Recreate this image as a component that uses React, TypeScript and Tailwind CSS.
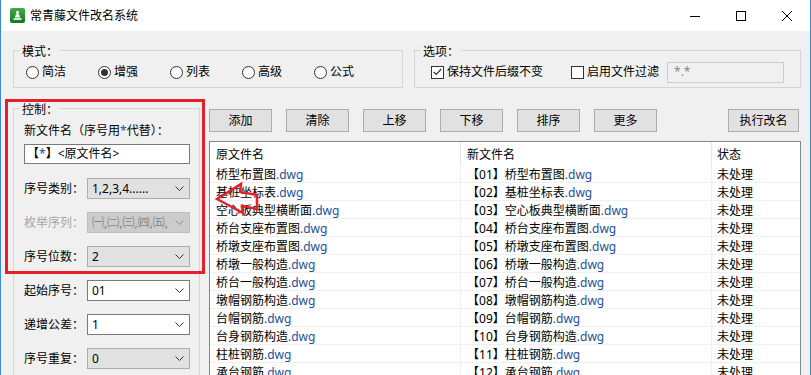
import React from "react";

const files = [
  "桥型布置图",
  "基桩坐标表",
  "空心板典型横断面",
  "桥台支座布置图",
  "桥墩支座布置图",
  "桥墩一般构造",
  "桥台一般构造",
  "墩帽钢筋构造",
  "台帽钢筋",
  "台身钢筋构造",
  "柱桩钢筋",
  "承台钢筋",
  "系梁钢筋",
];

function Chevron({ color = "#333333" }: { color?: string }) {
  return (
    <svg width="9" height="5" viewBox="0 0 9 5" className="shrink-0">
      <path d="M0.5 0.5 L4.5 4.5 L8.5 0.5" stroke={color} strokeWidth="1" fill="none" />
    </svg>
  );
}

function Radio({ label, checked }: { label: string; checked?: boolean }) {
  return (
    <div className="flex items-center w-[72px] gap-[3px]">
      <span className="w-[13px] h-[13px] rounded-full border border-[#333333] bg-white flex items-center justify-center shrink-0">
        {checked && <span className="w-[7px] h-[7px] rounded-full bg-[#333333]" />}
      </span>
      <span>{label}</span>
    </div>
  );
}

function Check({ checked }: { checked?: boolean }) {
  return (
    <span className="w-[13px] h-[13px] border border-[#333333] bg-white flex items-center justify-center shrink-0">
      {checked && (
        <svg width="9" height="8" viewBox="0 0 9 8">
          <path d="M0.8 4 L3.3 6.5 L8.2 1" stroke="#333333" strokeWidth="1.2" fill="none" />
        </svg>
      )}
    </span>
  );
}

type Variant = "list" | "edit" | "disabled";

const selectStyles: Record<Variant, string> = {
  list: "bg-[#e1e1e1] border-[#adadad] text-black",
  edit: "bg-white border-[#7a7a7a] text-black",
  disabled: "bg-[#cccccc] border-[#bfbfbf] text-[#838383]",
};

function Select({ value, variant }: { value: string; variant: Variant }) {
  return (
    <div className={"w-[103px] h-[21px] border flex items-center pl-[4px] pr-[5px] gap-[2px] " + selectStyles[variant]}>
      <span className="flex-1 overflow-hidden whitespace-nowrap">{value}</span>
      <Chevron color={variant === "disabled" ? "#8a8a8a" : "#333333"} />
    </div>
  );
}

function Field({ label, value, variant }: { label: string; value: string; variant: Variant }) {
  return (
    <div className="flex items-center h-[21px]">
      <span className={"w-[63px] " + (variant === "disabled" ? "text-[#a6a6a6]" : "text-black")}>{label}</span>
      <Select value={value} variant={variant} />
    </div>
  );
}

function Btn({ children, wide }: { children: React.ReactNode; wide?: boolean }) {
  return (
    <div
      className={
        (wide ? "w-[71px] ml-auto mr-[2px] " : "w-[63px] ") +
        "h-[23px] bg-[#e1e1e1] border border-[#adadad] flex items-center justify-center"
      }
    >
      {children}
    </div>
  );
}

function FileName({ name }: { name: string }) {
  return (
    <>
      {name}
      <span className="text-[#1d4f9c]">.dwg</span>
    </>
  );
}

function GroupLabel({ children }: { children: React.ReactNode }) {
  return (
    <span className="absolute left-[6px] top-[-7px] px-[2px] bg-[#f0f0f0] leading-[16px] whitespace-nowrap">
      {children}
    </span>
  );
}

function TitleBar() {
  return (
    <div className="h-[31px] bg-white flex items-center shrink-0">
      <div className="ml-[9px] w-[15px] h-[15px] rounded-[2px] bg-[linear-gradient(#3fae48,#127a22)] flex items-center justify-center">
        <svg width="11" height="11" viewBox="0 0 11 11">
          <rect x="4.3" y="1" width="2.4" height="3.5" fill="white" />
          <path d="M2.8 7.5 L3.8 4.5 L7.2 4.5 L8.2 7.5 Z" fill="white" />
          <rect x="1.5" y="8.2" width="8" height="1.6" fill="white" />
        </svg>
      </div>
      <span className="ml-[5px]">常青藤文件改名系统</span>
      <div className="ml-auto flex h-full">
        <div className="w-[46px] h-full flex items-center justify-center">
          <svg width="12" height="10" viewBox="0 0 12 10">
            <path d="M1 5.5 H11" stroke="#000" strokeWidth="1" />
          </svg>
        </div>
        <div className="w-[46px] h-full flex items-center justify-center">
          <svg width="12" height="12" viewBox="0 0 12 12">
            <rect x="1.5" y="1.5" width="9" height="9" stroke="#000" strokeWidth="1" fill="none" />
          </svg>
        </div>
        <div className="w-[46px] h-full flex items-center justify-center">
          <svg width="12" height="12" viewBox="0 0 12 12">
            <path d="M1 1 L11 11 M11 1 L1 11" stroke="#000" strokeWidth="1" />
          </svg>
        </div>
      </div>
    </div>
  );
}

export default function App() {
  return (
    <div className="w-[811px] h-[375px] overflow-hidden relative flex flex-col border-x border-[#3d87d6] bg-[#f0f0f0] text-[12px] leading-[16px] text-black font-['Noto_Sans','Noto_Sans_CJK_SC',sans-serif]">
      <TitleBar />
      <div className="flex-1 min-h-0 flex flex-col pl-[12px] pr-[9px] pt-[19px]">
        {/* top row */}
        <div className="flex gap-[11px] shrink-0">
          <div className="relative w-[390px] h-[38px] border border-[#d5d5d5] pt-[12px] pl-[12px]">
            <GroupLabel>模式：</GroupLabel>
            <div className="flex items-center h-[18px]">
              <Radio label="简洁" />
              <Radio label="增强" checked />
              <Radio label="列表" />
              <Radio label="高级" />
              <Radio label="公式" />
            </div>
          </div>
          <div className="relative w-[387px] h-[38px] border border-[#d5d5d5] pt-[12px] pl-[16px]">
            <GroupLabel>选项：</GroupLabel>
            <div className="flex items-center h-[18px]">
              <div className="flex items-center gap-[3px]">
                <Check checked />
                <span>保持文件后缀不变</span>
              </div>
              <div className="flex items-center gap-[3px] ml-[28px]">
                <Check />
                <span>启用文件过滤</span>
              </div>
              <div className="ml-[8px] w-[117px] h-[21px] border border-[#cccccc] bg-[#f0f0f0] flex items-center pl-[6px] text-[#8a8a8a]">
                *.*
              </div>
            </div>
          </div>
        </div>

        {/* bottom row */}
        <div className="flex mt-[20px] flex-1 min-h-0">
          <div className="relative w-[187px] h-[300px] shrink-0 border border-[#d5d5d5] pl-[10px] pt-[14px]">
            <GroupLabel>控制：</GroupLabel>
            <div className="flex flex-col">
              <div className="h-[16px] whitespace-nowrap">
                新文件名（序号用<span className="text-[#1d4f9c]">*</span>代替）：
              </div>
              <div className="mt-[5px] w-[166px] h-[20px] border border-[#7a7a7a] bg-white flex items-center pl-[2px] whitespace-nowrap">
                【<span className="text-[#1d4f9c]">*</span>】&lt;原文件名&gt;
              </div>
              <div className="mt-[14px] flex flex-col gap-[13px]">
                <Field label="序号类别：" value="1,2,3,4......" variant="list" />
                <Field label="枚举序列：" value="㈠,㈡,㈢,㈣,㈤," variant="disabled" />
                <Field label="序号位数：" value="2" variant="list" />
                <Field label="起始序号：" value="01" variant="edit" />
                <Field label="递增公差：" value="1" variant="edit" />
                <Field label="序号重复：" value="0" variant="list" />
              </div>
            </div>
          </div>

          <div className="flex-1 ml-[9px] flex flex-col pt-[1px] min-w-0">
            <div className="flex gap-[14px] shrink-0">
              <Btn>添加</Btn>
              <Btn>清除</Btn>
              <Btn>上移</Btn>
              <Btn>下移</Btn>
              <Btn>排序</Btn>
              <Btn>更多</Btn>
              <Btn wide>执行改名</Btn>
            </div>
            <div className="mt-[9px] h-[260px] shrink-0 border border-[#828790] bg-white flex flex-col">
              <div className="flex h-[23px] shrink-0">
                <div className="w-[251px] h-full border-r border-[#e5e5e5] pl-[6px] pt-[5px]">原文件名</div>
                <div className="w-[251px] h-full border-r border-[#e5e5e5] pl-[6px] pt-[5px]">新文件名</div>
                <div className="flex-1 h-full pl-[5px] pt-[5px]">状态</div>
              </div>
              {files.map((f, i) => (
                <div key={f} className="flex h-[18px] shrink-0 border-b border-[#f0f0f0]">
                  <div className="w-[251px] h-[17px] border-r border-[#f0f0f0] pl-[6px] pt-[2px] leading-[16px] whitespace-nowrap">
                    <FileName name={f} />
                  </div>
                  <div className="w-[251px] h-[17px] border-r border-[#f0f0f0] pl-[6px] pt-[2px] leading-[16px] whitespace-nowrap">
                    【{String(i + 1).padStart(2, "0")}】<FileName name={f} />
                  </div>
                  <div className="flex-1 h-[17px] pl-[5px] pt-[2px] leading-[16px] whitespace-nowrap">未处理</div>
                </div>
              ))}
            </div>
          </div>
        </div>
      </div>

      {/* red annotation box */}
      <div className="absolute left-[4px] top-[99px] w-[200px] h-[175px] border-[3px] border-[#e5202a] pointer-events-none" />
      {/* red annotation arrow */}
      <svg className="absolute left-[210px] top-[180px] pointer-events-none" width="54" height="38" viewBox="0 0 54 38">
        <path
          d="M6 19 L30 4 L29 12 L46 15 L46 29 L31 26 L32 33 Z"
          stroke="#e5202a"
          strokeWidth="2.5"
          fill="none"
          strokeLinejoin="miter"
        />
      </svg>
    </div>
  );
}
